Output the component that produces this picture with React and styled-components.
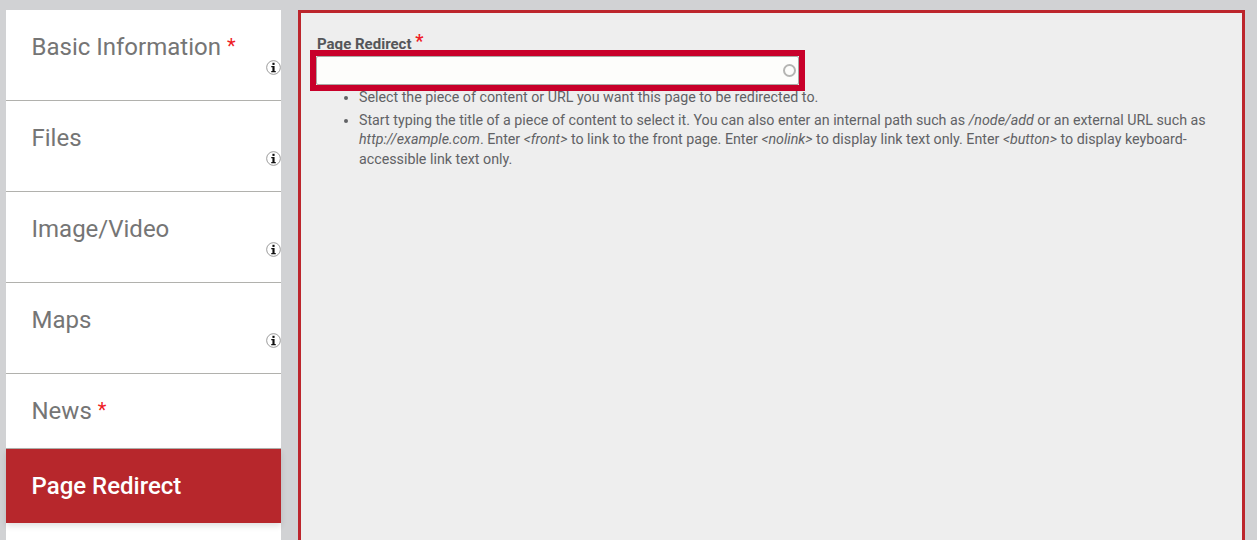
import styled, { createGlobalStyle } from "styled-components";

const GlobalStyle = createGlobalStyle`
  html, body {
    margin: 0;
    height: 540px;
    overflow: hidden;
    background: #d1d2d4;
    font-family: Roboto, "Liberation Sans", sans-serif;
  }
`;

const Page = styled.div`
  display: flex;
  align-items: flex-start;
  height: 530px;
  overflow: hidden;
  padding: 10px 12px 0 6px;
  gap: 17px;
`;

const Sidebar = styled.ul`
  width: 275px;
  flex: none;
  height: 530px;
  margin: 0;
  padding: 0;
  list-style: none;
  background: #fff;
`;

const Tab = styled.li`
  position: relative;
  box-sizing: border-box;
  height: ${(p) => (p.$active ? "74px" : p.$short ? "75px" : "91px")};
  padding: 22px 26px 0 25.5px;
  font-size: 24px;
  line-height: 30px;
  font-weight: ${(p) => (p.$active ? 500 : 400)};
  color: ${(p) => (p.$active ? "#fff" : "#757575")};
  background: ${(p) => (p.$active ? "#b7272c" : "transparent")};
  border-bottom: ${(p) => (p.$active ? "none" : "1px solid #b1b1ad")};
  box-shadow: ${(p) => (p.$active ? "0 3px 6px rgba(0, 0, 0, 0.12)" : "none")};
`;

const Star = styled.span`
  color: #ee1c25;
  font-size: ${(p) => p.$size || "20px"};
  line-height: 0;
  margin-left: ${(p) => p.$gap || "6px"};
  vertical-align: 2px;
`;

const InfoIcon = styled.svg`
  position: absolute;
  right: 0;
  bottom: 25px;
  width: 15px;
  height: 15px;
`;

const Info = () => (
  <InfoIcon viewBox="0 0 14 14">
    <circle cx="7" cy="7" r="6.4" fill="#fff" stroke="#8a8a8a" strokeWidth="0.8" />
    <rect x="6" y="2.6" width="2" height="2" fill="#111" />
    <path d="M4.9 5.6H8v4.6h1.1v1.2H4.9v-1.2H6V6.8H4.9z" fill="#111" />
  </InfoIcon>
);

const Main = styled.main`
  flex: 1;
  box-sizing: border-box;
  height: 530px;
  padding: 23px 16px 0 16px;
  background: #eee;
  border: 3px solid #bc252c;
  border-bottom: none;
`;

const Label = styled.label`
  display: block;
  font-size: 15px;
  line-height: 17px;
  font-weight: 700;
  color: #55565a;
`;

const FieldWrap = styled.div`
  position: relative;
  width: 483px;
  height: 29px;
  margin: 3px 0 0 -1px;
  outline: 6px solid #c8002a;
`;

const Input = styled.input`
  display: block;
  box-sizing: border-box;
  width: 100%;
  height: 100%;
  padding: 0 24px 0 6px;
  background: #fdfdfb;
  border: 1px solid #a9a9a5;
  border-radius: 2px;
  outline: none;
`;

const Throbber = styled.span`
  position: absolute;
  right: 3px;
  top: 8px;
  box-sizing: border-box;
  width: 13px;
  height: 13px;
  border: 2px solid #b5b5b3;
  border-radius: 50%;
`;

const Help = styled.ul`
  margin: 3.3px 0 0;
  padding: 0 0 0 42px;
  font-size: 14.25px;
  line-height: 19.5px;
  color: #616265;
  li + li {
    margin-top: 3px;
  }
`;

const tabs = [
  { name: "Basic Information", star: true, info: true },
  { name: "Files", info: true },
  { name: "Image/Video", info: true },
  { name: "Maps", info: true },
  { name: "News", star: true, short: true },
];

export default function App() {
  return (
    <>
      <GlobalStyle />
      <Page>
        <Sidebar>
          {tabs.map((t) => (
            <Tab key={t.name} $short={t.short}>
              {t.name}
              {t.star && <Star>*</Star>}
              {t.info && <Info />}
            </Tab>
          ))}
          <Tab $short $active>
            Page Redirect
          </Tab>
        </Sidebar>
        <Main>
          <Label>
            Page Redirect <Star $size="18px" $gap="0">*</Star>
          </Label>
          <FieldWrap>
            <Input type="text" />
            <Throbber />
          </FieldWrap>
          <Help>
            <li>Select the piece of content or URL you want this page to be redirected to.</li>
            <li>
              Start typing the title of a piece of content to select it. You can also enter an internal path such as{" "}
              <em>/node/add</em> or an external URL such as <em>http://example.com</em>. Enter <em>&lt;front&gt;</em> to
              link to the front page. Enter <em>&lt;nolink&gt;</em> to display link text only. Enter{" "}
              <em>&lt;button&gt;</em> to display keyboard-accessible link text only.
            </li>
          </Help>
        </Main>
      </Page>
    </>
  );
}
